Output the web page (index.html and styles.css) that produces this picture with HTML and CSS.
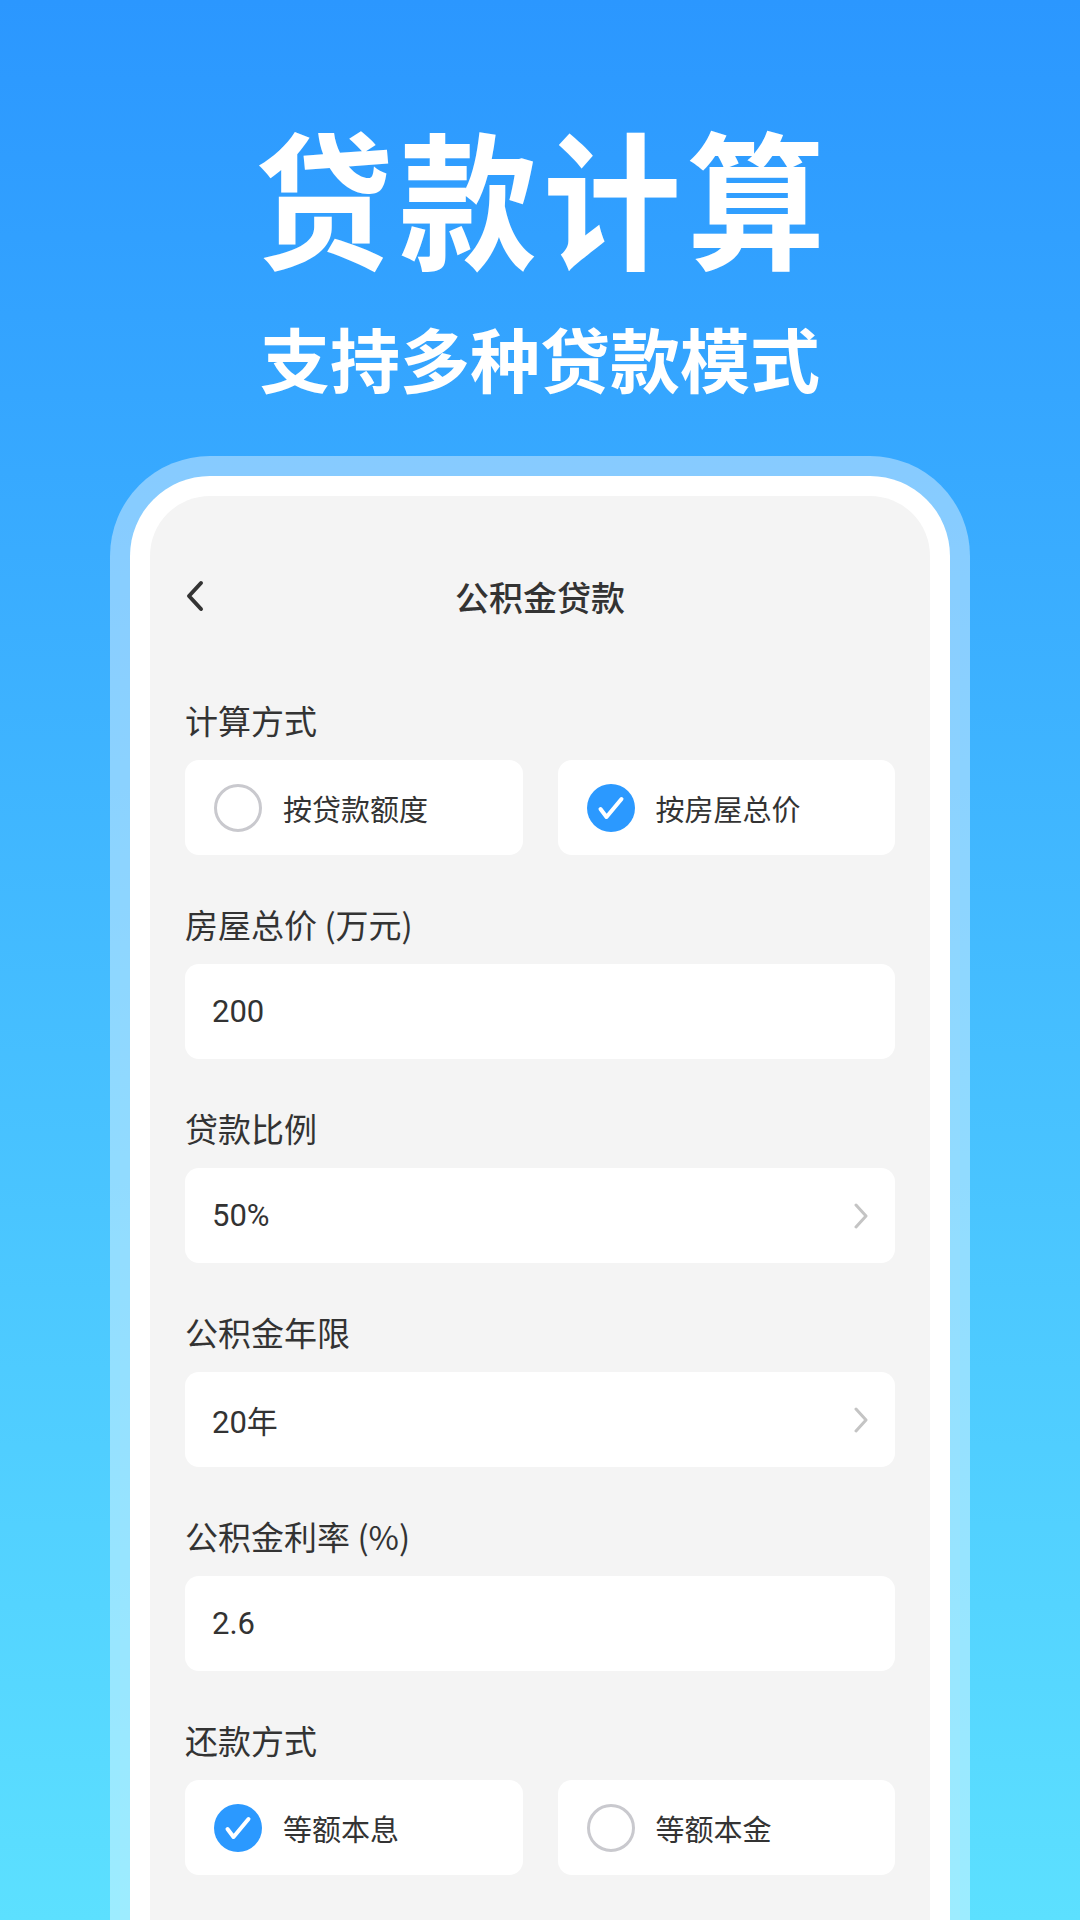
FILE: index.html
```html
<!DOCTYPE html>
<html lang="zh-CN">
<head>
<meta charset="utf-8">
<title>贷款计算</title>
<link rel="stylesheet" href="styles.css">
</head>
<body>
<div class="page">
  <header class="hero">
    <h1 class="hero-title">贷款计算</h1>
    <p class="hero-sub">支持多种贷款模式</p>
  </header>
  <div class="frame">
    <div class="frame-white">
      <div class="screen">
        <div class="nav">
          <svg class="nav-back" viewBox="0 0 20 32" width="20" height="32"><path d="M16 3 L4 16 L16 29" fill="none" stroke="#333" stroke-width="4" stroke-linecap="round" stroke-linejoin="round"/></svg>
          <div class="nav-title">公积金贷款</div>
        </div>

        <div class="section first">
          <div class="label">计算方式</div>
          <div class="options">
            <div class="option"><span class="radio"></span><span class="opt-text">按贷款额度</span></div>
            <div class="option"><span class="radio checked"><svg viewBox="0 0 48 48" width="48" height="48"><path d="M13.5 25 L19.5 33 L34.5 15" fill="none" stroke="#fff" stroke-width="4" stroke-linecap="round" stroke-linejoin="round"/></svg></span><span class="opt-text">按房屋总价</span></div>
          </div>
        </div>

        <div class="section">
          <div class="label">房屋总价 (万元)</div>
          <div class="field"><span class="value">200</span></div>
        </div>

        <div class="section">
          <div class="label">贷款比例</div>
          <div class="field"><span class="value">50%</span><svg class="chev" viewBox="0 0 16 26" width="16" height="26"><path d="M3 2 L13 13 L3 24" fill="none" stroke="#C4C4C4" stroke-width="3" stroke-linecap="round" stroke-linejoin="round"/></svg></div>
        </div>

        <div class="section">
          <div class="label">公积金年限</div>
          <div class="field"><span class="value">20年</span><svg class="chev" viewBox="0 0 16 26" width="16" height="26"><path d="M3 2 L13 13 L3 24" fill="none" stroke="#C4C4C4" stroke-width="3" stroke-linecap="round" stroke-linejoin="round"/></svg></div>
        </div>

        <div class="section">
          <div class="label">公积金利率 (%)</div>
          <div class="field"><span class="value">2.6</span></div>
        </div>

        <div class="section">
          <div class="label">还款方式</div>
          <div class="options">
            <div class="option"><span class="radio checked"><svg viewBox="0 0 48 48" width="48" height="48"><path d="M13.5 25 L19.5 33 L34.5 15" fill="none" stroke="#fff" stroke-width="4" stroke-linecap="round" stroke-linejoin="round"/></svg></span><span class="opt-text">等额本息</span></div>
            <div class="option"><span class="radio"></span><span class="opt-text">等额本金</span></div>
          </div>
        </div>
      </div>
    </div>
  </div>
</div>
</body>
</html>
```

FILE: styles.css
```css
* { box-sizing: border-box; }
html, body { margin: 0; padding: 0; }
body {
  width: 1080px;
  height: 1920px;
  overflow: hidden;
  font-family: "Noto Sans CJK SC", "Noto Sans", sans-serif;
  background: linear-gradient(180deg, #2B97FF 0%, #5CE0FF 100%);
}
.page {
  display: flex;
  flex-direction: column;
  height: 1920px;
}
.hero {
  padding-top: 119px;
  text-align: center;
  color: #fff;
}
.hero-title {
  margin: 0;
  font-size: 138px;
  line-height: 150px;
  font-weight: 700;
  letter-spacing: 6px;
  padding-left: 6px;
  transform: scaleY(1.07);
}
.hero-sub {
  margin: 49px 0 0;
  font-size: 70px;
  line-height: 80px;
  font-weight: 700;
  letter-spacing: 0;
}
.frame {
  margin: 58px 110px 0;
  flex: 1;
  background: rgba(255, 255, 255, 0.4);
  border-radius: 100px 100px 0 0;
  padding: 20px 20px 0;
  display: flex;
}
.frame-white {
  flex: 1;
  background: #fff;
  border-radius: 80px 80px 0 0;
  padding: 20px 20px 0;
  display: flex;
}
.screen {
  flex: 1;
  background: #F4F4F4;
  border-radius: 60px 60px 0 0;
  padding: 60px 35px 0;
}
.nav {
  position: relative;
  height: 80px;
  display: flex;
  align-items: center;
  justify-content: center;
}
.nav-back {
  position: absolute;
  left: 0;
  top: 24px;
}
.nav-title {
  font-size: 34px;
  font-weight: 500;
  color: #333;
}
.section { margin-top: 48px; }
.section.first { margin-top: 63px; }
.label {
  font-size: 33px;
  line-height: 43px;
  height: 43px;
  color: #333;
  margin-bottom: 18px;
}
.options {
  display: grid;
  grid-template-columns: 1fr 1fr;
  gap: 35px;
}
.option {
  height: 95px;
  background: #fff;
  border-radius: 14px;
  display: flex;
  align-items: center;
  padding-left: 29px;
  gap: 21px;
}
.radio {
  width: 48px;
  height: 48px;
  border-radius: 50%;
  border: 3px solid #C9C9CE;
  flex: none;
  display: flex;
}
.radio.checked {
  border: none;
  background: #2B99FF;
}
.opt-text {
  font-size: 29px;
  color: #333;
}
.field {
  height: 95px;
  background: #fff;
  border-radius: 14px;
  display: flex;
  align-items: center;
  justify-content: space-between;
  padding: 0 26px 0 27px;
}
.value {
  font-family: Roboto, "Noto Sans CJK SC", sans-serif;
  font-size: 31px;
  color: #333;
}
.chev { flex: none; }
```
